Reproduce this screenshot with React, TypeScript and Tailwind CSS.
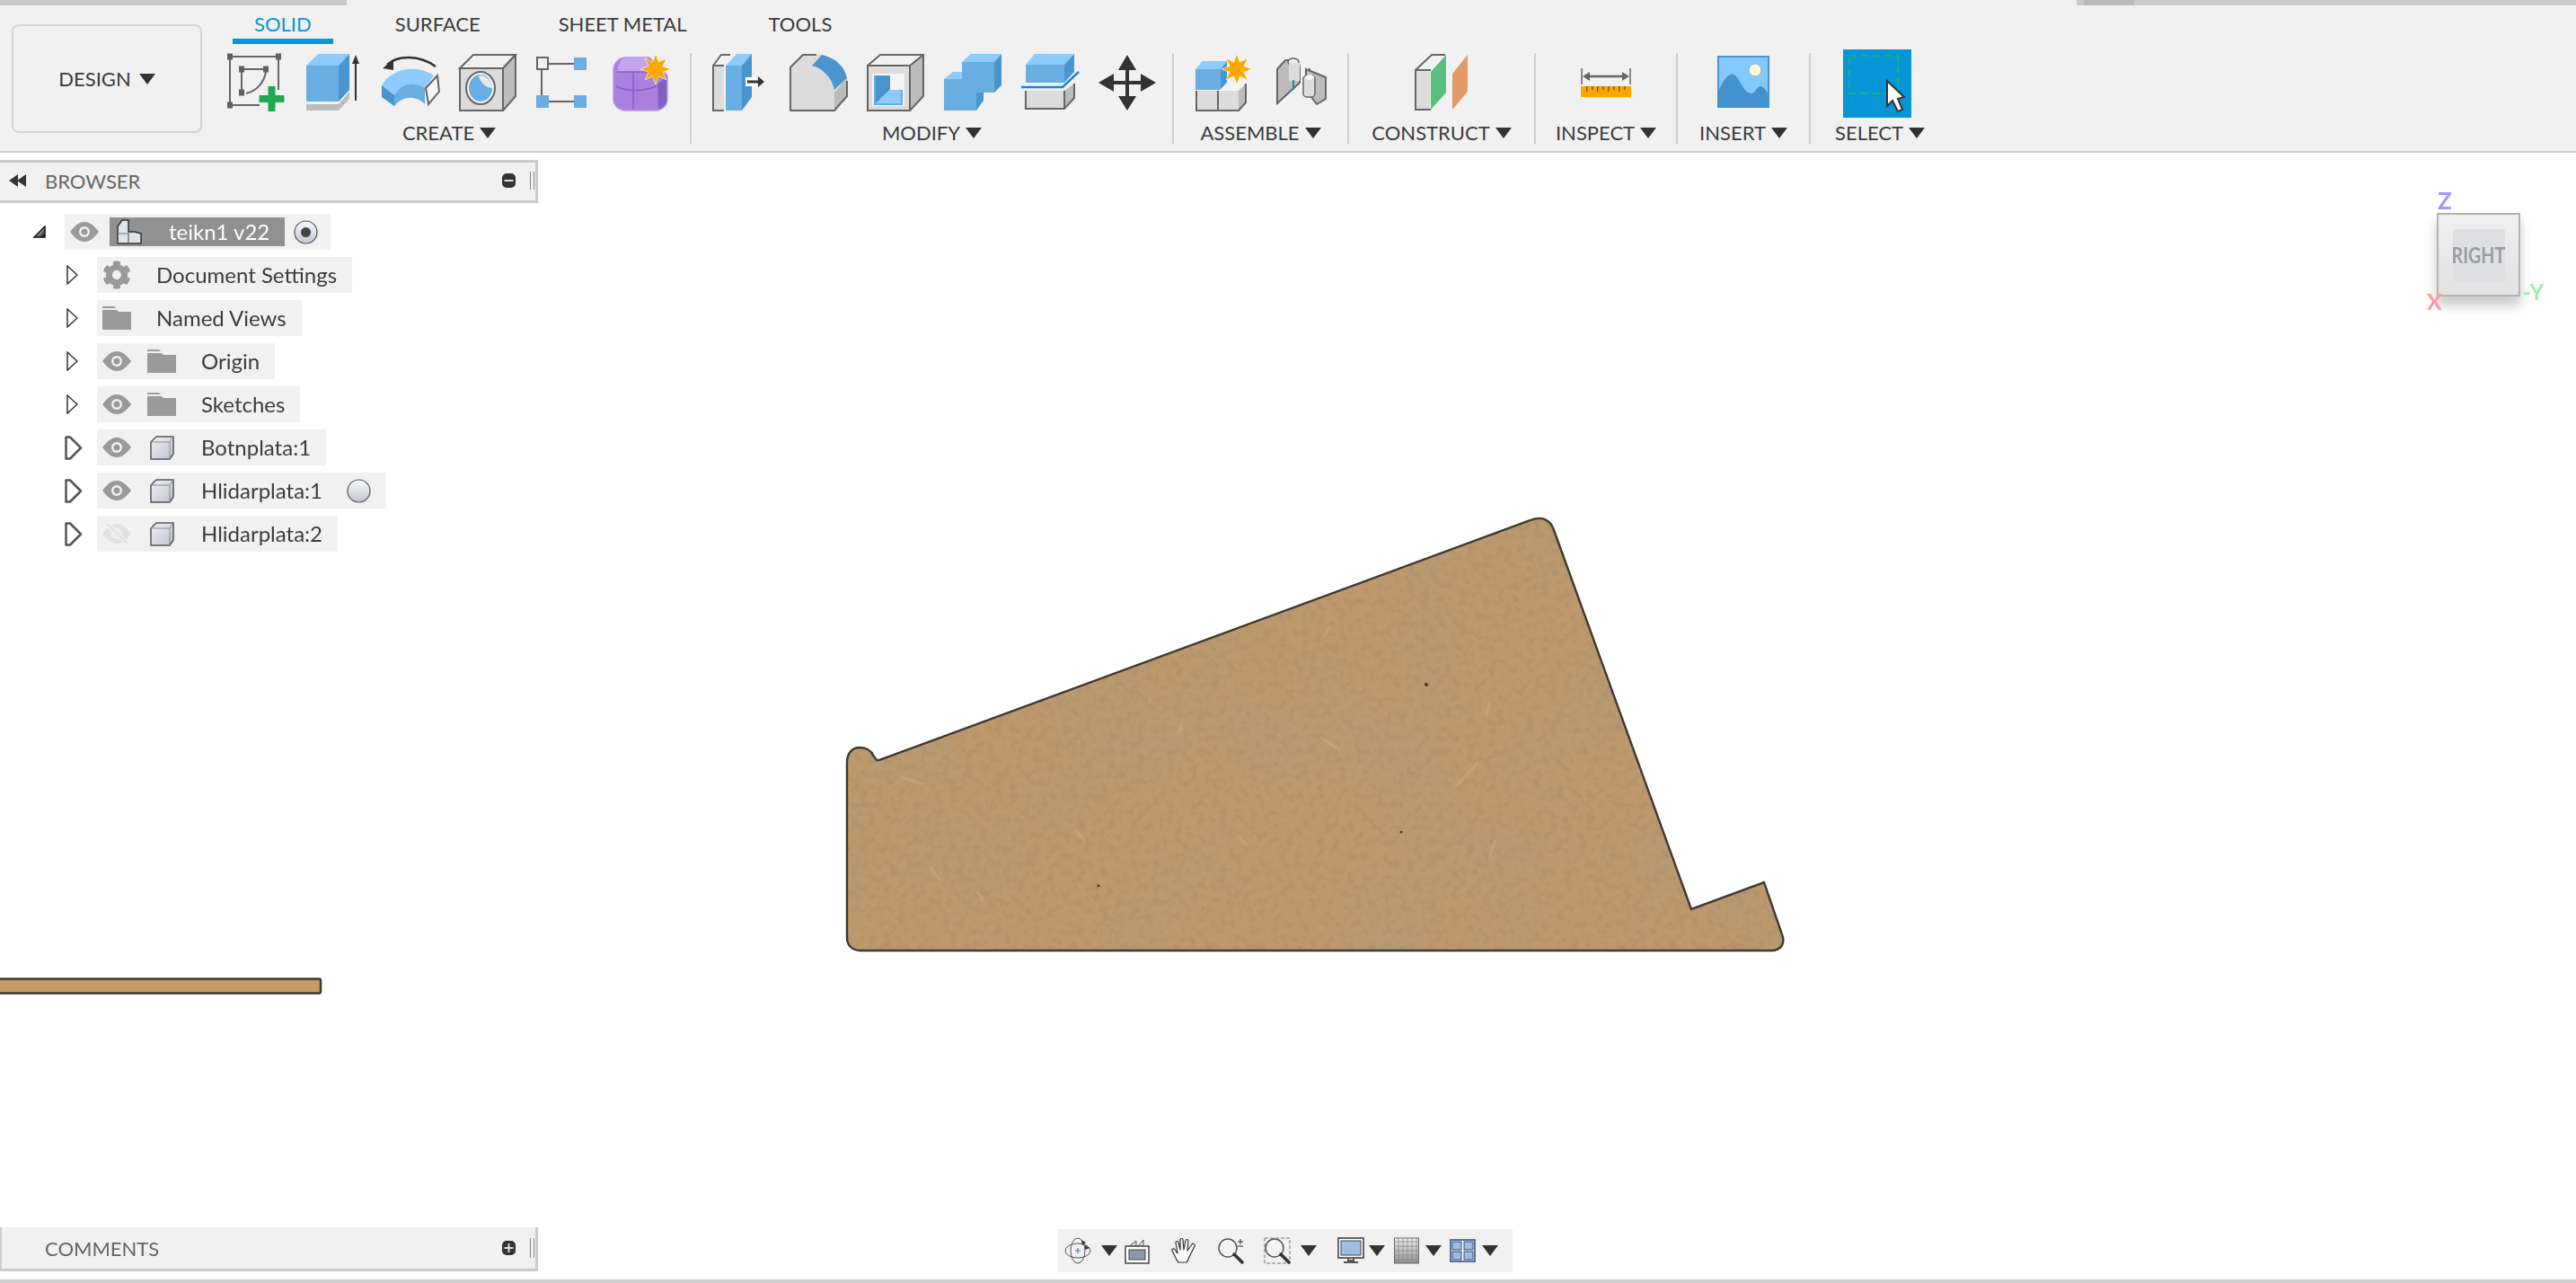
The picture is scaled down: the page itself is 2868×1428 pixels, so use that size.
import React from 'react'
import { FaCog } from 'react-icons/fa'

const BLUE = '#69aee3'
const LIGHT = '#8ccbfb'
const DARK = '#4a95ce'
const EDGE = '#666666'
const GREY = '#dcdcdc'
const GREY_SIDE = '#bcbcbc'
const ORANGE = '#f9a800'

function starPoints(cx: number, cy: number, r1: number, r2: number, n: number) {
  const pts: string[] = []
  for (let i = 0; i < n * 2; i++) {
    const r = i % 2 ? r2 : r1
    const a = (Math.PI * i) / n - Math.PI / 2
    pts.push(`${(cx + r * Math.cos(a)).toFixed(1)},${(cy + r * Math.sin(a)).toFixed(1)}`)
  }
  return pts.join(' ')
}

function Star({ cx, cy, r }: { cx: number; cy: number; r: number }) {
  return <polygon points={starPoints(cx, cy, r, r * 0.5, 8)} fill={ORANGE} stroke="#ffffff" strokeWidth="0.6" />
}

function Svg({ w = 64, h = 64, children }: { w?: number; h?: number; children: React.ReactNode }) {
  return (
    <svg width={w} height={h} viewBox={`0 0 ${w} ${h}`} className="shrink-0 overflow-visible">
      {children}
    </svg>
  )
}

function Caret({ w = 18, h = 12 }: { w?: number; h?: number }) {
  return (
    <svg width={w} height={h} viewBox="0 0 18 12" preserveAspectRatio="none" className="shrink-0">
      <polygon points="0,0 18,0 9,12" fill="#333333" />
    </svg>
  )
}

function SketchIcon() {
  const sq = [[3, 3], [57, 3], [3, 57], [16, 17], [43, 17], [16, 43]]
  return (
    <Svg>
      <g stroke={EDGE} strokeWidth="2" fill="none">
        <path d="M3 3H57V40M3 3V57H36" />
        <path d="M16 17H43M16 17V43M43 20C41 32 33 41 21 44" />
      </g>
      {sq.map(([x, y]) => (
        <rect key={`${x}-${y}`} x={x - 3} y={y - 3.5} width="6" height="7" fill="#5f5f5f" />
      ))}
      <path d="M45.500 36h8v10h10v8h-10v10h-8v-10h-10v-8h10z" fill="#22a94f" />
    </Svg>
  )
}

function ExtrudeIcon() {
  return (
    <Svg>
      <g transform="translate(2 0)">
        <polygon points="0,56 36,56 48,42 48,50 36,63 0,63" fill={GREY_SIDE} />
        <polygon points="0,13 13,0 48,0 36,13" fill={LIGHT} />
        <polygon points="0,13 36,13 36,53 0,53" fill={BLUE} />
        <polygon points="36,13 48,0 48,40 36,53" fill={DARK} />
        <path d="M55 52V8" stroke="#333" strokeWidth="2" />
        <polygon points="55,1 51,11 59,11" fill="#333" />
      </g>
    </Svg>
  )
}

function RevolveIcon() {
  return (
    <Svg>
      <path d="M6 12C18 1 42 1 60 14" stroke="#333" strokeWidth="2.500" fill="none" />
      <polygon points="1,16 13,6 13,18" fill="#333" />
      <path d="M0 35C10 18 36 10 58 24L48 38C36 30 22 32 14 46Z" fill={LIGHT} />
      <path d="M0 35L14 46C20 40 24 36 33 34L33 46C25 46 18 52 14 58L0 48Z" fill={DARK} />
      <path d="M14 46C22 32 36 30 48 38L48 56C38 46 24 46 14 58Z" fill={BLUE} />
      <polygon points="49,38 62,24 64,42 52,56" fill="#f4f4f4" stroke={EDGE} strokeWidth="2" />
    </Svg>
  )
}

function HoleIcon() {
  return (
    <Svg>
      <polygon points="1,16 16,1 63,1 49,16" fill="#f1f1f1" stroke={EDGE} strokeWidth="2" />
      <polygon points="1,16 49,16 49,63 1,63" fill={GREY} />
      <polygon points="49,16 63,1 63,46 49,63" fill={GREY_SIDE} />
      <path d="M1 16H49V63H1ZM49 63L63 47V1M49 16L63 1" fill="none" stroke={EDGE} strokeWidth="2" />
      <ellipse cx="24" cy="38" rx="16" ry="18" fill="#f1f1f1" stroke={EDGE} strokeWidth="2" />
      <ellipse cx="24" cy="38" rx="13" ry="15" fill={BLUE} />
      <path d="M22 24C30 23 37 30 37 38C32 38 24 34 22 24Z" fill="#e9e9e9" />
    </Svg>
  )
}

function PatternIcon() {
  return (
    <Svg>
      <path d="M13 11H28M6 18V46M13 53H28" stroke={EDGE} strokeWidth="2" />
      <rect x="1" y="4" width="12" height="13" fill="#f1f1f1" stroke={EDGE} strokeWidth="2" />
      <rect x="42" y="4" width="14" height="14" fill={BLUE} />
      <rect x="0" y="46" width="14" height="14" fill={BLUE} />
      <rect x="42" y="46" width="14" height="14" fill={BLUE} />
      <rect x="28" y="10" width="14" height="2" fill={EDGE} />
      <rect x="28" y="52" width="14" height="2" fill={EDGE} />
    </Svg>
  )
}

function FormIcon() {
  return (
    <Svg>
      <path d="M14 4H40L60 24V50C60 58 54 63 46 63H14C6 63 0 58 0 50V18C0 10 6 4 14 4Z" fill="#a97fe0" />
      <path d="M14 4H38L42 20H4C5 11 8 6 14 4Z" fill="#c4a6ee" />
      <path d="M49 34L60 24V50C60 56 56 60 50 62Z" fill="#8360c2" />
      <path d="M3 36C14 42 32 42 48 36M22 20V62M4 20H44" stroke="#8360c2" strokeWidth="1.500" fill="none" />
      <path d="M14 4H40L60 24V50C60 58 54 63 46 63H14C6 63 0 58 0 50V18C0 10 6 4 14 4Z" fill="none" stroke="#b79ae8" strokeWidth="1.500" />
      <Star cx={47} cy={17} r={17} />
    </Svg>
  )
}

function PressPullIcon() {
  return (
    <Svg>
      <polygon points="1,13 14,1 30,1 14,13" fill="#f1f1f1" />
      <rect x="1" y="13" width="12" height="50" fill={GREY} />
      <path d="M20 1H10L1 13V63H13M1 13H13" fill="none" stroke={EDGE} strokeWidth="2" />
      <polygon points="15,13 27,0 44,0 33,13" fill={LIGHT} />
      <rect x="15" y="13" width="18" height="50" fill={BLUE} />
      <polygon points="33,13 44,0 44,48 33,63" fill={DARK} />
      <rect x="37" y="26" width="12" height="10" fill="#ffffff" />
      <path d="M39 31H53" stroke="#333" strokeWidth="3" />
      <polygon points="58,31 51,25 51,37" fill="#333" />
    </Svg>
  )
}

function FilletIcon() {
  return (
    <Svg>
      <path d="M1 15L15 1H36L25 13C37 15 48 25 50 40V63H1Z" fill={GREY} />
      <polygon points="50,42 64,27 64,47 50,63" fill={GREY_SIDE} />
      <path d="M36 1C50 4 62 14 64 27L50 40C47 26 37 16 25 13Z" fill={DARK} />
      <path d="M30 1H15L1 15V63H50L64 47V30" fill="none" stroke={EDGE} strokeWidth="2" />
    </Svg>
  )
}

function ShellIcon() {
  return (
    <Svg>
      <polygon points="1,13 15,1 63,1 48,13" fill="#f1f1f1" />
      <rect x="1" y="13" width="47" height="50" fill={GREY} />
      <polygon points="48,13 63,1 63,47 48,63" fill={GREY_SIDE} />
      <path d="M1 13H48V63H1ZM1 13L15 1H63V47L48 63M48 13L63 1" fill="none" stroke={EDGE} strokeWidth="2" />
      <rect x="6" y="22" width="36" height="36" fill="#f4f4f4" />
      <polygon points="9,24 26,24 26,40 9,56" fill={DARK} />
      <polygon points="26,40 39,40 39,56 9,56" fill={LIGHT} />
      <path d="M9 24V56H39V40" stroke={BLUE} strokeWidth="2" fill="none" />
    </Svg>
  )
}

function CombineIcon() {
  return (
    <Svg>
      <polygon points="20,9 30,0 64,0 56,9" fill={LIGHT} />
      <rect x="20" y="9" width="36" height="34" fill={BLUE} />
      <polygon points="56,9 64,0 64,35 56,43" fill={DARK} />
      <polygon points="0,28 10,20 20,20 20,28" fill={LIGHT} />
      <rect x="0" y="28" width="36" height="35" fill={BLUE} />
      <polygon points="36,43 44,43 44,52 36,63" fill={DARK} />
    </Svg>
  )
}

function SplitIcon() {
  return (
    <Svg>
      <polygon points="5,12 15,0 59,0 48,12" fill={LIGHT} />
      <rect x="5" y="12" width="43" height="20" fill={BLUE} />
      <polygon points="48,12 59,0 59,20 48,32" fill={DARK} />
      <path d="M0 37H46L64 20" stroke="#1f86cf" strokeWidth="2.500" fill="none" />
      <path d="M5 41H48V62H5Z" fill={GREY} />
      <polygon points="48,41 59,33 59,50 48,62" fill={GREY_SIDE} />
      <path d="M5 41V61H48L59 49V33M48 41V61" fill="none" stroke={EDGE} strokeWidth="2" />
    </Svg>
  )
}

function MoveIcon() {
  return (
    <Svg>
      <path d="M32 8V56M8 32H56" stroke="#333" strokeWidth="4" />
      <polygon points="32,1 22,18 42,18" fill="#333" />
      <polygon points="32,63 22,47 42,47" fill="#333" />
      <polygon points="0,32 17,22 17,42" fill="#333" />
      <polygon points="64,32 47,22 47,42" fill="#333" />
    </Svg>
  )
}

function NewComponentIcon() {
  return (
    <Svg>
      <polygon points="0,17 8,8 35,8 28,17" fill={LIGHT} />
      <rect x="0" y="17" width="28" height="23" fill={BLUE} />
      <polygon points="28,17 35,8 35,32 28,40" fill={DARK} />
      <rect x="1" y="41" width="23" height="22" fill={GREY} />
      <rect x="26" y="41" width="22" height="22" fill={GREY} />
      <polygon points="26,41 34,33 56,33 48,41" fill="#f4f4f4" />
      <polygon points="48,41 56,33 56,54 48,63" fill={GREY_SIDE} />
      <path d="M1 41V63H48L56 54V33M25 41V63" fill="none" stroke={EDGE} strokeWidth="2" />
      <Star cx={46} cy={17} r={17} />
    </Svg>
  )
}

function JointIcon() {
  return (
    <Svg w={56}>
      <path d="M1 55V17L10 7H22C26 9 26 14 26 20V32L1 55Z" fill={GREY_SIDE} stroke={EDGE} strokeWidth="2" />
      <ellipse cx="19" cy="9" rx="6" ry="4" fill="#eeeeee" stroke={EDGE} strokeWidth="1.500" />
      <rect x="14" y="10" width="12" height="20" fill="#dddddd" />
      <path d="M19 29V40M37 16V28" stroke="#1f86cf" strokeWidth="2" />
      <polygon points="33,17 55,26 55,50 45,56 33,40" fill={GREY_SIDE} stroke={EDGE} strokeWidth="2" />
      <rect x="30" y="24" width="13" height="24" rx="4" fill="#dddddd" stroke={EDGE} strokeWidth="1.500" />
      <ellipse cx="37" cy="26" rx="5" ry="3" fill="#f6f6f6" />
    </Svg>
  )
}

function ConstructIcon() {
  return (
    <Svg w={60}>
      <rect x="1" y="18" width="16" height="44" fill={GREY} />
      <path d="M18 62H1V18L19 1H34M1 18H18" fill="none" stroke={EDGE} strokeWidth="2" />
      <polygon points="18,20 35,1 35,43 18,62" fill="#58c182" />
      <polygon points="42,22 59,1 59,42 42,62" fill="#e29a66" />
    </Svg>
  )
}

function InspectIcon() {
  const ticks = [6, 12, 18, 24, 30, 36, 42, 48]
  return (
    <Svg w={56}>
      <path d="M1 16V34M55 16V34" stroke={EDGE} strokeWidth="1.500" />
      <path d="M6 25H50" stroke={EDGE} strokeWidth="2.500" />
      <polygon points="2,25 10,20 10,30" fill={EDGE} />
      <polygon points="54,25 46,20 46,30" fill={EDGE} />
      <rect x="0" y="36" width="56" height="12" fill={ORANGE} />
      {ticks.map((x, i) => (
        <rect key={x} x={x} y="36" width="1.500" height={i % 2 ? 4 : 6} fill="#7a5a10" />
      ))}
    </Svg>
  )
}

function InsertIcon() {
  return (
    <Svg w={58}>
      <rect x="1" y="3" width="56" height="56" fill="#85c8fb" stroke="#4a95ce" strokeWidth="2" />
      <circle cx="42" cy="18" r="7" fill="#fbfbdc" stroke="#7fb2dc" strokeWidth="1" />
      <path d="M1 42C6 30 14 18 20 24C26 30 30 44 38 44C42 44 44 36 48 36C52 36 55 42 57 46V60H1Z" fill="#4391cd" />
    </Svg>
  )
}

function SelectIcon() {
  return (
    <div className="-mt-[5px] mr-[6px] h-[76px] w-[76px] bg-[#0696d7]">
      <svg width="76" height="76" viewBox="0 0 76 76" className="overflow-visible">
        <rect x="7" y="7" width="54" height="42" fill="none" stroke="#20b26a" strokeWidth="2" strokeDasharray="8 5" />
        <polygon points="49,35 49,63 55,57 61,69 66,67 61,55 68,53" fill="#ffffff" stroke="#333333" strokeWidth="2" />
      </svg>
    </div>
  )
}

type Group = { label: string; width: string; rowClass: string; icons: React.ReactNode; last?: boolean }

const groups: Group[] = [
  {
    label: 'CREATE',
    width: 'w-[538px]',
    rowClass: 'gap-[22px]',
    icons: (
      <>
        <SketchIcon />
        <ExtrudeIcon />
        <RevolveIcon />
        <HoleIcon />
        <PatternIcon />
        <FormIcon />
      </>
    ),
  },
  {
    label: 'MODIFY',
    width: 'w-[537px]',
    rowClass: 'gap-[22px] pl-[5px]',
    icons: (
      <>
        <PressPullIcon />
        <FilletIcon />
        <ShellIcon />
        <CombineIcon />
        <SplitIcon />
        <MoveIcon />
      </>
    ),
  },
  {
    label: 'ASSEMBLE',
    width: 'w-[195px]',
    rowClass: 'gap-[26px]',
    icons: (
      <>
        <NewComponentIcon />
        <JointIcon />
      </>
    ),
  },
  { label: 'CONSTRUCT', width: 'w-[208px]', rowClass: '', icons: <ConstructIcon /> },
  { label: 'INSPECT', width: 'w-[158px]', rowClass: '', icons: <InspectIcon /> },
  { label: 'INSERT', width: 'w-[148px]', rowClass: '', icons: <InsertIcon /> },
  { label: 'SELECT', width: 'w-[154px]', rowClass: '', icons: <SelectIcon />, last: true },
]

function ToolGroup({ group }: { group: Group }) {
  return (
    <div className={`flex h-[101px] flex-col items-center ${group.width} ${group.last ? '' : 'border-r-2 border-[#cfcfcf]'}`}>
      <div className={`mt-px flex h-[64px] items-start ${group.rowClass}`}>{group.icons}</div>
      <div className="mt-[12px] flex items-center gap-[6px] text-[22px] leading-[24px] text-[#3c3c3c]">
        {group.label}
        <Caret />
      </div>
    </div>
  )
}

function Ribbon() {
  return (
    <header className="h-[170px] shrink-0 border-b-2 border-[#cccccc] bg-[#f1f1f1]">
      <div className="flex h-[6px]">
        <div className="w-[386px] bg-[#c9c9c9]" />
        <div className="ml-[1926px] w-[8px] bg-[#c9c9c9]" />
        <div className="w-[56px] bg-[#b8b8b8]" />
        <div className="flex-1 bg-[#cbcbcb]" />
      </div>
      <div className="flex">
        <button className="ml-[13px] mt-[21px] flex h-[121px] w-[212px] items-center justify-center gap-[9px] rounded-[8px] border-2 border-[#d4d4d4] text-[22px] text-[#3c3c3c]">
          DESIGN
          <Caret />
        </button>
        <div className="flex flex-col">
          <nav className="ml-[34px] flex h-[43px] text-[22px] text-[#3c3c3c]">
            <span className="border-b-[6px] border-[#0696d7] px-[24px] pt-[7px] leading-[28px] text-[#0696d7]">SOLID</span>
            <span className="ml-[45px] px-[24px] pt-[7px] leading-[28px]">SURFACE</span>
            <span className="ml-[39px] px-[24px] pt-[7px] leading-[28px]">SHEET METAL</span>
            <span className="ml-[43px] px-[24px] pt-[7px] leading-[28px]">TOOLS</span>
          </nav>
          <div className="ml-[7px] mt-[10px] flex">
            {groups.map((g) => (
              <ToolGroup key={g.label} group={g} />
            ))}
          </div>
        </div>
      </div>
    </header>
  )
}

function Eye({ off }: { off?: boolean }) {
  const c = off ? '#e2e2e2' : '#9a9a9a'
  return (
    <svg width="32" height="22" viewBox="0 0 32 22" className="shrink-0">
      <path d="M0 11C6 3 11 0 16 0C21 0 26 3 32 11C26 19 21 22 16 22C11 22 6 19 0 11Z" fill={c} />
      <circle cx="16" cy="11" r="6" fill="#f1f1f1" />
      <circle cx="16" cy="11" r="3.500" fill={c} />
      {off && <path d="M5 1L27 21" stroke="#f1f1f1" strokeWidth="5" />}
      {off && <path d="M5 0L28 22" stroke={c} strokeWidth="2" />}
    </svg>
  )
}

function Folder() {
  return (
    <svg width="32" height="26" viewBox="0 0 32 26" className="shrink-0">
      <path d="M0 0H13L15 2H0ZM0 4H16L18 6H32V26H0Z" fill="#9a9a9a" />
    </svg>
  )
}

function BodyCube() {
  return (
    <svg width="32" height="27" viewBox="0 0 32 27" className="shrink-0">
      <path d="M4 7L10 1H29V20L25 26H4Z" fill="url(#bodyFill)" stroke="#555555" strokeWidth="1.500" strokeLinejoin="round" />
      <path d="M4 7H25V26M25 7L29 1" fill="none" stroke="#8a8a8a" strokeWidth="1" />
    </svg>
  )
}

function Radio({ on }: { on?: boolean }) {
  return (
    <svg width="27" height="27" viewBox="0 0 27 27" className="shrink-0">
      <circle cx="13.500" cy="13.500" r="12.500" fill="url(#radioFill)" stroke="#555555" strokeWidth="1.200" />
      {on && <circle cx="13.500" cy="13.500" r="5.500" fill="#444444" />}
    </svg>
  )
}

function Expander({ heavy }: { heavy?: boolean }) {
  return heavy ? (
    <svg width="20" height="27" viewBox="0 0 20 27" className="mr-[16px] -ml-[2px] shrink-0">
      <path d="M1.500 1.500H6L18 13.500L6 25.500H1.500Z" fill="#ffffff" stroke="#555555" strokeWidth="2.500" strokeLinejoin="round" />
    </svg>
  ) : (
    <svg width="13" height="22" viewBox="0 0 13 22" className="mr-[21px] shrink-0">
      <path d="M1 1L12 11L1 21Z" fill="#ffffff" stroke="#333333" strokeWidth="1.500" />
    </svg>
  )
}

function TreeRow({ heavy, icons, label, radio }: { heavy?: boolean; icons: React.ReactNode; label: string; radio?: boolean }) {
  return (
    <div className="ml-[74px] flex h-[40px] items-center">
      <Expander heavy={heavy} />
      <div className="flex h-[40px] items-center bg-[#f1f1f1] pl-[6px] pr-[17px] text-[#3c3c3c]">
        <div className="flex items-center gap-[18px]">{icons}</div>
        <span className="ml-[28px] text-[24px] leading-none">{label}</span>
        {radio && (
          <span className="ml-[27px]">
            <Radio />
          </span>
        )}
      </div>
    </div>
  )
}

function PanelPill({ plus }: { plus?: boolean }) {
  return (
    <svg width="15" height="16" viewBox="0 0 15 16" className="ml-auto shrink-0">
      <rect width="15" height="16" rx="5" fill="#333333" />
      <path d={plus ? 'M2.500 8H12.500M7.500 3V13' : 'M2.500 8H12.500'} stroke="#dddddd" strokeWidth="2" />
    </svg>
  )
}

function Browser() {
  return (
    <section>
      <div className="flex h-[48px] items-center border-y-[3px] border-r-[3px] border-[#cccccc] bg-[#f1f1f1] pb-[2px] text-[22px] text-[#666666]">
        <svg width="20" height="14" viewBox="0 0 20 14" className="ml-[10px]">
          <polygon points="0,7 10,0 10,14" fill="#333" />
          <polygon points="9,7 19,0 19,14" fill="#333" />
        </svg>
        <span className="ml-[20px]">BROWSER</span>
        <PanelPill />
        <span className="ml-[16px] mr-[1px] h-[20px] w-[5px] border-x border-[#888888]" />
      </div>
      <div className="mt-[12px] flex flex-col gap-[8px]">
        <div className="ml-[37px] flex h-[40px] items-center">
          <svg width="14" height="14" viewBox="0 0 14 14" className="mr-[21px] shrink-0">
            <polygon points="13,1 13,13 1,13" fill="url(#rootArrow)" stroke="#111111" strokeWidth="1.500" />
          </svg>
          <div className="flex h-[40px] w-[296px] items-center bg-[#f1f1f1] pl-[6px]">
            <Eye />
            <div className="ml-[12px] flex h-[32px] w-[195px] items-center bg-[#909090] pl-[8px] text-[24px] text-white">
              <svg width="28" height="28" viewBox="0 0 28 28" className="shrink-0">
                <path d="M1 8L6 1H13V14H20L27 16V27H1Z" fill="#dfe3ea" stroke="#333333" strokeWidth="1.500" strokeLinejoin="round" />
                <path d="M1 16H13V27M13 14V27" stroke="#777777" strokeWidth="1" fill="none" />
              </svg>
              <span className="ml-[30px]">teikn1 v22</span>
            </div>
            <span className="ml-[10px]">
              <Radio on />
            </span>
          </div>
        </div>
        <TreeRow icons={<FaCog className="h-[32px] w-[32px] text-[#9a9a9a]" />} label="Document Settings" />
        <TreeRow icons={<Folder />} label="Named Views" />
        <TreeRow icons={<><Eye /><Folder /></>} label="Origin" />
        <TreeRow icons={<><Eye /><Folder /></>} label="Sketches" />
        <TreeRow heavy icons={<><Eye /><BodyCube /></>} label="Botnplata:1" />
        <TreeRow heavy icons={<><Eye /><BodyCube /></>} label="Hlidarplata:1" radio />
        <TreeRow heavy icons={<><Eye off /><BodyCube /></>} label="Hlidarplata:2" />
      </div>
    </section>
  )
}

function Comments() {
  return (
    <div className="flex h-[49px] items-center border-b-[3px] border-l-[2px] border-r-[3px] border-[#cccccc] bg-[#f1f1f1] text-[22px] text-[#666666]">
      <span className="ml-[48px]">COMMENTS</span>
      <PanelPill plus />
      <span className="ml-[16px] mr-[1px] h-[22px] w-[5px] border-x border-[#888888]" />
    </div>
  )
}

const fibres = [
  [1470, 820, 1492, 835],
  [1646, 848, 1621, 875],
  [1004, 865, 1029, 873],
  [1481, 697, 1474, 708],
  [1313, 817, 1316, 803],
  [1278, 783, 1282, 776],
  [1088, 993, 1095, 1003],
  [1036, 965, 1046, 980],
  [1197, 923, 1208, 937],
  [1380, 930, 1388, 942],
  [1660, 780, 1654, 796],
  [1665, 935, 1658, 955],
]

const specks = [
  [1588, 762, 2],
  [1560, 926, 1.6],
  [1223, 986, 1.4],
]

const PART =
  'M943 849C943 838 949 832 957 832C965 832 970 835 973 842L976 846L979 846L1704 579C1716 574 1726 578 1730 590L1883 1012L1964 982L1984 1040C1988 1050 1983 1058 1972 1058H958C949 1058 943 1052 943 1044Z'

function Part() {
  return (
    <svg viewBox="0 170 2868 1254" className="absolute inset-0 h-full w-full">
      <defs>
        <clipPath id="partClip">
          <path d={PART} />
        </clipPath>
        <filter id="grain" x="0" y="0" width="100%" height="100%">
          <feTurbulence type="fractalNoise" baseFrequency="0.12" numOctaves="4" seed="8" />
          <feColorMatrix values="0 0 0 0 0.36  0 0 0 0 0.25  0 0 0 0 0.14  0 0 0 2.600 -1.150" />
        </filter>
        <filter id="blotch" x="0" y="0" width="100%" height="100%">
          <feTurbulence type="fractalNoise" baseFrequency="0.008" numOctaves="3" seed="3" />
          <feColorMatrix values="0 0 0 0 0.42  0 0 0 0 0.34  0 0 0 0 0.22  0 0 0 2 -0.850" />
        </filter>
        <filter id="soft">
          <feGaussianBlur stdDeviation="0.8" />
        </filter>
        <linearGradient id="bodyFill" x1="0" y1="0" x2="1" y2="1">
          <stop offset="0" stopColor="#f2f3f6" />
          <stop offset="1" stopColor="#bcc1cc" />
        </linearGradient>
        <linearGradient id="radioFill" x1="0" y1="0" x2="0" y2="1">
          <stop offset="0" stopColor="#fbfbfd" />
          <stop offset="1" stopColor="#bfc5d2" />
        </linearGradient>
        <linearGradient id="rootArrow" x1="0" y1="0" x2="1" y2="1">
          <stop offset="0.2" stopColor="#ffffff" />
          <stop offset="0.9" stopColor="#222222" />
        </linearGradient>
      </defs>
      <path d={PART} fill="#be996d" />
      <g clipPath="url(#partClip)">
        <rect x="930" y="570" width="1070" height="500" filter="url(#blotch)" opacity="0.4" />
        <rect x="930" y="570" width="1070" height="500" filter="url(#grain)" opacity="0.45" />
        <g filter="url(#soft)">
          {fibres.map(([x1, y1, x2, y2]) => (
            <line key={`${x1}-${y1}`} x1={x1} y1={y1} x2={x2} y2={y2} stroke="#dcc09a" strokeWidth="1.600" opacity="0.55" />
          ))}
        </g>
        {specks.map(([cx, cy, r]) => (
          <circle key={`${cx}-${cy}`} cx={cx} cy={cy} r={r} fill="#4a3422" />
        ))}
      </g>
      <path d={PART} fill="none" stroke="#3d3a30" strokeWidth="2.400" />
      <rect x="-8" y="1089.500" width="365" height="16" rx="2" fill="#c39a68" stroke="#3d3a30" strokeWidth="2.500" />
    </svg>
  )
}

function ViewCube() {
  return (
    <div className="absolute left-[2700px] top-[40px] h-[136px] w-[130px] font-[Lato,sans-serif] blur-[0.6px]">
      <span className="absolute left-[14px] top-[0px] text-[26px] font-bold leading-[26px] text-[#9a9aff]">Z</span>
      <div className="absolute left-[13px] top-[27px] flex h-[93px] w-[93px] items-center justify-center border-[2px] border-[#b4b4b4] bg-gradient-to-b from-[#f0f0f0] to-[#e2e2e2] shadow-[0_10px_12px_rgba(0,0,0,0.22)]">
        <span className="flex h-[58px] w-[58px] items-center justify-center bg-[#dfe0e3] text-[24px] font-bold text-[#9a9ca0]">
          <span className="scale-x-[0.82]">RIGHT</span>
        </span>
      </div>
      <span className="absolute left-[2px] top-[113px] text-[25px] font-bold leading-[25px] text-[#ff9a9a]">X</span>
      <span className="absolute left-[109px] top-[102px] whitespace-nowrap text-[24px] font-bold leading-[25px] text-[#9af0a8]">-Y</span>
    </div>
  )
}

function Orbit() {
  return (
    <Svg w={30} h={30}>
      <ellipse cx="15" cy="15" rx="14" ry="8" fill="none" stroke="#555" strokeWidth="1" />
      <ellipse cx="15" cy="15" rx="8" ry="14" fill="none" stroke="#555" strokeWidth="1" />
      <rect x="9" y="9" width="12" height="12" fill="#f1f1f1" />
      <path d="M15 12V18M12 15H18" stroke="#1f86cf" strokeWidth="1.200" />
      <polygon points="19,3 24,6 20,9" fill="#333" />
      <polygon points="23,9 28,12 23,14" fill="#333" />
    </Svg>
  )
}

function LookAt() {
  return (
    <Svg w={28} h={30}>
      <path d="M3 12L13 4V10" fill="#dddddd" stroke="#555" strokeWidth="1" />
      <path d="M15 10L21 3V10" fill="#dddddd" stroke="#555" strokeWidth="1" />
      <rect x="1" y="10" width="26" height="19" fill="#ffffff" stroke="#444" strokeWidth="1.500" />
      <rect x="5" y="14" width="18" height="11" fill="#8f98a8" stroke="#444" strokeWidth="1" />
    </Svg>
  )
}

function Hand() {
  return (
    <Svg w={30} h={30}>
      <path
        d="M8 27L2 15C1 13 4 12 5 14L8 18L6 6C6 4 9 4 9 6L11 14L11 3C11 1 14 1 14 3L15 14L17 4C17 2 20 2 20 4L19 15L24 8C25 6 28 8 27 10L21 22C20 25 19 27 18 28H9Z"
        fill="#fbfbfb"
        stroke="#333"
        strokeWidth="1.200"
        strokeLinejoin="round"
      />
    </Svg>
  )
}

function Magnifier({ dashed, plus }: { dashed?: boolean; plus?: boolean }) {
  return (
    <Svg w={30} h={30}>
      {dashed && <rect x="1" y="1" width="28" height="28" fill="none" stroke="#777" strokeWidth="1" strokeDasharray="4 2" />}
      <circle cx="12" cy="12" r="10" fill="#eef5f5" stroke="#555" strokeWidth="1.500" />
      <path d="M19 19L28 28" stroke="#333" strokeWidth="3.500" strokeLinecap="round" />
      {plus && <path d="M23 5H29M26 2V8M23 10H29" stroke="#333" strokeWidth="1" />}
    </Svg>
  )
}

function Display() {
  return (
    <Svg w={30} h={30}>
      <rect x="1" y="1" width="28" height="22" fill="#ffffff" stroke="#333" strokeWidth="1.500" />
      <rect x="4" y="4" width="22" height="16" fill="#9dbde2" stroke="#445" strokeWidth="1" />
      <path d="M12 23V26H18V23M7 28H23" stroke="#555" strokeWidth="2" fill="none" />
    </Svg>
  )
}

function GridIcon() {
  const lines = [5, 10, 15, 20, 25]
  return (
    <Svg w={28} h={30}>
      <defs>
        <linearGradient id="gridFill" x1="0" y1="0" x2="0" y2="1">
          <stop offset="0" stopColor="#f1f1f1" />
          <stop offset="1" stopColor="#8f8f8f" />
        </linearGradient>
      </defs>
      <rect x="0.500" y="1" width="27" height="28" fill="url(#gridFill)" stroke="#666" strokeWidth="1" />
      {lines.map((p) => (
        <path key={p} d={`M${p} 1V29M0 ${p}H28`} stroke="#8a8a8a" strokeWidth="0.800" />
      ))}
    </Svg>
  )
}

function Viewports() {
  return (
    <Svg w={29} h={30}>
      <rect x="1" y="3" width="27" height="24" fill="#ffffff" stroke="#2c4a78" strokeWidth="1.500" />
      {[[3, 5], [16, 5], [3, 16], [16, 16]].map(([x, y]) => (
        <rect key={`${x}-${y}`} x={x} y={y} width="10" height="9" fill="#9dbde2" stroke="#2c4a78" strokeWidth="1" />
      ))}
    </Svg>
  )
}

function NavBar() {
  return (
    <div className="flex h-[48px] w-[506px] items-center bg-[#f1f1f1] pl-[7px]">
      <Orbit />
      <span className="ml-[11px]"><Caret /></span>
      <span className="ml-[8px]"><LookAt /></span>
      <span className="ml-[23px]"><Hand /></span>
      <span className="ml-[22px]"><Magnifier plus /></span>
      <span className="ml-[22px]"><Magnifier dashed /></span>
      <span className="ml-[11px]"><Caret /></span>
      <span className="ml-[23px]"><Display /></span>
      <span className="ml-[5px]"><Caret /></span>
      <span className="ml-[10px]"><GridIcon /></span>
      <span className="ml-[7px]"><Caret /></span>
      <span className="ml-[9px]"><Viewports /></span>
      <span className="ml-[7px]"><Caret /></span>
    </div>
  )
}

export default function App() {
  return (
    <div className="flex h-[1428px] w-[2868px] flex-col overflow-hidden bg-white font-[Lato,sans-serif]">
      <Ribbon />
      <main className="relative flex flex-1">
        <Part />
        <ViewCube />
        <div className="relative flex w-[599px] flex-col justify-between pb-[9px] pt-[8px]">
          <Browser />
          <Comments />
        </div>
        <div className="relative flex flex-1 items-end pb-[8px] pl-[579px]">
          <NavBar />
        </div>
      </main>
      <footer className="h-[4px] shrink-0 bg-[#cccccc]" />
    </div>
  )
}
